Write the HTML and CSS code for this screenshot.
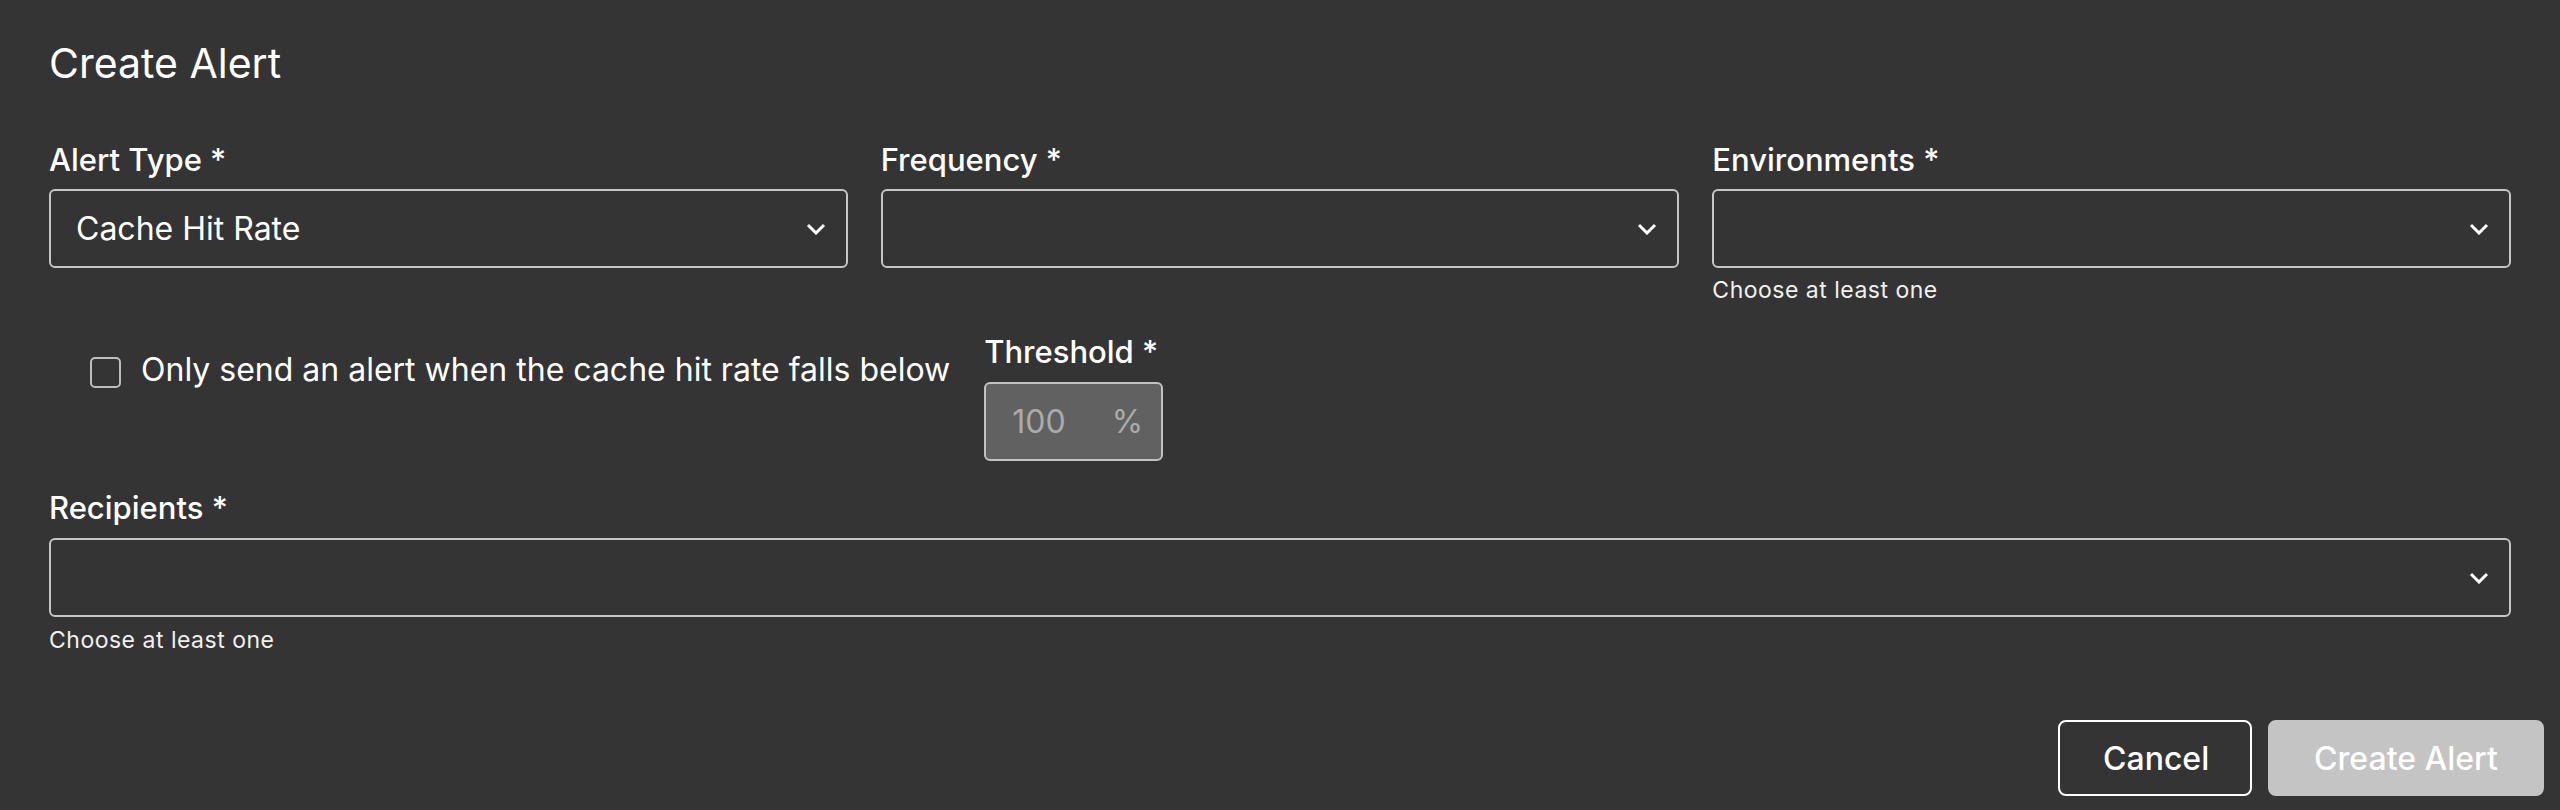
FILE: index.html
```html
<!DOCTYPE html>
<html lang="en">
<head>
<meta charset="utf-8">
<title>Create Alert</title>
<link rel="stylesheet" href="styles.css">
</head>
<body>
<div class="dialog">
  <h2 class="title">Create Alert</h2>

  <div class="grid3">
    <div class="field">
      <div class="label">Alert Type <span class="req">*</span></div>
      <div class="select">
        <span class="value">Cache Hit Rate</span>
        <svg class="chev" width="20" height="12" viewBox="0 0 20 12"><polyline points="2,2 10,10 18,2" fill="none" stroke="#fff" stroke-width="3"/></svg>
      </div>
    </div>
    <div class="field">
      <div class="label">Frequency <span class="req">*</span></div>
      <div class="select">
        <span class="value"></span>
        <svg class="chev" width="20" height="12" viewBox="0 0 20 12"><polyline points="2,2 10,10 18,2" fill="none" stroke="#fff" stroke-width="3"/></svg>
      </div>
    </div>
    <div class="field">
      <div class="label">Environments <span class="req">*</span></div>
      <div class="select">
        <span class="value"></span>
        <svg class="chev" width="20" height="12" viewBox="0 0 20 12"><polyline points="2,2 10,10 18,2" fill="none" stroke="#fff" stroke-width="3"/></svg>
      </div>
      <div class="helper">Choose at least one</div>
    </div>
  </div>

  <div class="threshold-row">
    <label class="check">
      <span class="box"></span>
      <span class="check-text">Only send an alert when the cache hit rate falls below</span>
    </label>
    <div class="field threshold">
      <div class="label">Threshold <span class="req">*</span></div>
      <div class="num-input">
        <span class="num">100</span>
        <span class="unit">%</span>
      </div>
    </div>
  </div>

  <div class="field recipients">
    <div class="label">Recipients <span class="req">*</span></div>
    <div class="select">
      <span class="value"></span>
      <svg class="chev" width="20" height="12" viewBox="0 0 20 12"><polyline points="2,2 10,10 18,2" fill="none" stroke="#fff" stroke-width="3"/></svg>
    </div>
    <div class="helper">Choose at least one</div>
  </div>

  <div class="footer">
    <button class="btn btn-outline">Cancel</button>
    <button class="btn btn-primary">Create Alert</button>
  </div>
</div>
</body>
</html>
```

FILE: styles.css
```css
* { box-sizing: border-box; }
html, body {
  margin: 0;
  padding: 0;
  background: #343434;
  color: #ffffff;
  font-family: Inter, "Noto Sans", sans-serif;
}
.dialog {
  padding: 41px 49px 0 49px;
}
.title {
  margin: 0;
  font-size: 41px;
  line-height: 45px;
  font-weight: 400;
}
.grid3 {
  margin-top: 54px;
  display: grid;
  grid-template-columns: 1fr 1fr 1fr;
  column-gap: 33px;
  align-items: start;
}
.field {
  display: flex;
  flex-direction: column;
}
.label {
  font-size: 31px;
  line-height: 40px;
  font-weight: 500;
}
.select {
  margin-top: 9px;
  height: 79px;
  border: 2px solid #c6c6c6;
  border-radius: 6px;
  display: flex;
  align-items: center;
  justify-content: space-between;
  padding: 0 20px 0 25px;
}
.value {
  font-size: 32px;
  font-weight: 400;
}
.chev { display: block; }
.helper {
  margin-top: 8px;
  font-size: 23px;
  line-height: 28px;
  letter-spacing: 0.5px;
  color: #f0f0f0;
}
.threshold-row {
  margin-top: 28px;
  display: flex;
  align-items: flex-start;
  gap: 34px;
}
.check {
  margin-left: 41px;
  margin-top: 18px;
  display: flex;
  align-items: center;
  height: 40px;
  gap: 20px;
}
.box {
  width: 31px;
  height: 31px;
  border: 2px solid #bdbdbd;
  border-radius: 5px;
  margin-top: 5px;
}
.check-text {
  font-size: 32px;
  line-height: 40px;
}
.num-input {
  margin-top: 10px;
  width: 179px;
  height: 79px;
  background: #616161;
  border: 2px solid #c2c2c2;
  border-radius: 6px;
  display: flex;
  align-items: center;
  justify-content: space-between;
  padding: 0 18px 0 26px;
  color: #ababab;
  font-size: 32px;
}
.recipients {
  margin-top: 27px;
}
.recipients .select { margin-top: 10px; }
.recipients .helper { margin-top: 9px; }
.footer {
  margin-top: 66px;
  margin-right: -33px;
  display: flex;
  justify-content: flex-end;
  gap: 16px;
}
.btn {
  height: 76px;
  border-radius: 8px;
  font-family: Inter, "Noto Sans", sans-serif;
  font-size: 32px;
  font-weight: 500;
  color: #ffffff;
  padding: 0 43px;
  cursor: pointer;
}
.btn-outline {
  width: 194px;
  background: transparent;
  border: 2px solid #ffffff;
}
.btn-primary {
  width: 276px;
  background: #c4c4c4;
  border: 2px solid #c4c4c4;
}
```
